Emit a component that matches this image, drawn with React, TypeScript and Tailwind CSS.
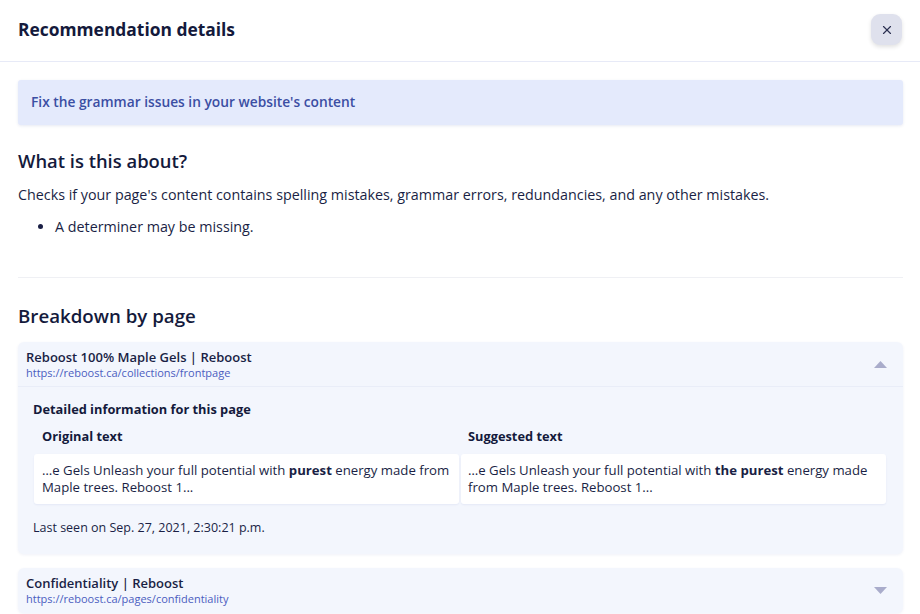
import { X } from 'lucide-react'

const pages = [
  {
    title: 'Reboost 100% Maple Gels | Reboost',
    url: 'https://reboost.ca/collections/frontpage',
    open: true,
  },
  {
    title: 'Confidentiality | Reboost',
    url: 'https://reboost.ca/pages/confidentiality',
    open: false,
  },
]

function Caret({ up }: { up: boolean }) {
  return (
    <svg width="13" height="7" viewBox="0 0 13 7" className="mr-[16px]">
      {up ? <path d="M6.5 0 L13 7 L0 7 Z" fill="#a9accb" /> : <path d="M0 0 L13 0 L6.5 7 Z" fill="#a9accb" />}
    </svg>
  )
}

export default function App() {
  return (
    <div
      className="w-[920px] h-[614px] overflow-hidden bg-white text-[#1a1f45]"
      style={{ fontFamily: '"Open Sans", "Noto Sans", sans-serif' }}
    >
      {/* header */}
      <div className="h-[62px] px-[18px] flex items-center justify-between border-b border-[#e7eaf7]">
        <h1 className="text-[17.4px] mt-[-2px] font-bold text-[#141a3c]">Recommendation details</h1>
        <button className="w-[31px] h-[31px] mt-[-2px] rounded-[9px] bg-[#dfe1ed] shadow-[0_2px_4px_rgba(0,0,0,0.12)] flex items-center justify-center">
          <X size={14} strokeWidth={2} color="#2c3152" />
        </button>
      </div>

      <div className="px-[18px] pr-[17px]">
        <div className="mt-[18px] h-[45px] px-[13px] flex items-center rounded-[3px] bg-[#e4eafc] shadow-[0_1px_3px_rgba(60,80,160,0.12)] text-[13.75px] font-semibold text-[#3b4ea3]">
          Fix the grammar issues in your website's content
        </div>

        <h2 className="mt-[23px] text-[18.4px] leading-[26px] font-semibold text-[#141a3c]">What is this about?</h2>
        <p className="mt-[11px] text-[14.3px] leading-[20px]">
          Checks if your page's content contains spelling mistakes, grammar errors, redundancies, and any other mistakes.
        </p>
        <ul className="mt-[12px] pl-[37px] list-disc text-[14.3px] leading-[20px]">
          <li>A determiner may be missing.</li>
        </ul>

        <div className="mt-[40px] border-t border-[#eff0f4]" />

        <h2 className="mt-[25px] text-[18.7px] leading-[26px] font-semibold text-[#141a3c]">Breakdown by page</h2>

        <div className="mt-[13px] flex flex-col gap-[14px]">
          {pages.map((p) => (
            <div key={p.url} className="rounded-[6px] bg-[#f3f6fd] shadow-[0_1px_3px_rgba(60,80,160,0.08)]">
              <div className={`h-[45px] pl-[8px] flex items-center justify-between ${p.open ? 'border-b border-[#e9edf8]' : ''}`}>
                <div className="flex flex-col">
                  <span className="text-[13px] leading-[17px] font-semibold text-[#1a1f45]">{p.title}</span>
                  <span className="text-[11px] leading-[14px] text-[#4b5dc0]">{p.url}</span>
                </div>
                <Caret up={p.open} />
              </div>
              {p.open && (
                <div className="pl-[15px] pr-[17px] pt-[12px] pb-[16px]">
                  <div className="text-[12.8px] leading-[20px] font-bold text-[#141a3c]">Detailed information for this page</div>
                  <div className="mt-[7px] grid grid-cols-2 gap-x-[2px] pl-[1px]">
                    <div className="pl-[8px] text-[12.8px] leading-[20px] font-bold text-[#141a3c]">Original text</div>
                    <div className="pl-[7px] text-[12.8px] leading-[20px] font-bold text-[#141a3c]">Suggested text</div>
                    <div className="mt-[8px] px-[8px] py-[8px] bg-white rounded-[3px] shadow-[0_1px_2px_rgba(60,80,160,0.08)] text-[13.2px] leading-[17px]">
                      <span>…e Gels Unleash your full potential with </span>
                      <b>purest</b>
                      <span> energy made from Maple trees. Reboost 1...</span>
                    </div>
                    <div className="mt-[8px] px-[7px] py-[8px] bg-white rounded-[3px] shadow-[0_1px_2px_rgba(60,80,160,0.08)] text-[13.2px] leading-[17px]">
                      <span>…e Gels Unleash your full potential with </span>
                      <b>the purest</b>
                      <span> energy made from Maple trees. Reboost 1...</span>
                    </div>
                  </div>
                  <div className="mt-[14px] text-[12.5px] leading-[20px]">Last seen on Sep. 27, 2021, 2:30:21 p.m.</div>
                </div>
              )}
            </div>
          ))}
        </div>
      </div>
    </div>
  )
}
